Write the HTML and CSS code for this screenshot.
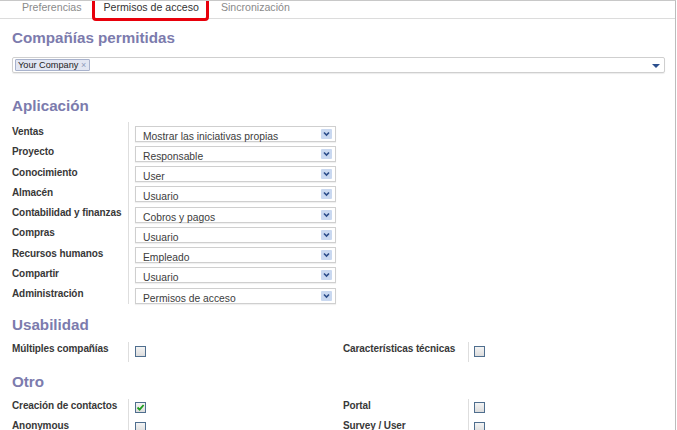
FILE: index.html
```html
<!DOCTYPE html>
<html lang="es">
<head>
<meta charset="utf-8">
<title>Permisos de acceso</title>
<link rel="stylesheet" href="styles.css">
</head>
<body>
<div class="page">
  <div class="tabs">
    <span class="tab">Preferencias</span>
    <span class="tab active">Permisos de acceso<span class="hl"></span></span>
    <span class="tab">Sincronización</span>
  </div>
  <div class="sheet">
    <h2 class="sec first">Compañías permitidas</h2>
    <div class="m2m">
      <span class="tag">Your Company <span class="x">×</span></span>
      <svg class="dd" width="8" height="4" viewBox="0 0 8 4"><path d="M0 0H8L4 4Z" fill="#2b4f8e"/></svg>
    </div>

    <h2 class="sec app-h">Aplicación</h2>
    <div class="apps">
      <div class="lbl">Ventas</div><div class="fld"><div class="sel"><span>Mostrar las iniciativas propias</span><svg class="arr" width="11" height="10" viewBox="0 0 11 10"><rect x="0" y="0" width="11" height="10" rx="1" fill="#c9d8f0"/><path d="M3 3.5L5.5 6L8 3.5" stroke="#2d4d8a" stroke-width="1.6" fill="none"/></svg></div></div>
      <div class="lbl">Proyecto</div><div class="fld"><div class="sel"><span>Responsable</span><svg class="arr" width="11" height="10" viewBox="0 0 11 10"><rect x="0" y="0" width="11" height="10" rx="1" fill="#c9d8f0"/><path d="M3 3.5L5.5 6L8 3.5" stroke="#2d4d8a" stroke-width="1.6" fill="none"/></svg></div></div>
      <div class="lbl">Conocimiento</div><div class="fld"><div class="sel"><span>User</span><svg class="arr" width="11" height="10" viewBox="0 0 11 10"><rect x="0" y="0" width="11" height="10" rx="1" fill="#c9d8f0"/><path d="M3 3.5L5.5 6L8 3.5" stroke="#2d4d8a" stroke-width="1.6" fill="none"/></svg></div></div>
      <div class="lbl">Almacén</div><div class="fld"><div class="sel"><span>Usuario</span><svg class="arr" width="11" height="10" viewBox="0 0 11 10"><rect x="0" y="0" width="11" height="10" rx="1" fill="#c9d8f0"/><path d="M3 3.5L5.5 6L8 3.5" stroke="#2d4d8a" stroke-width="1.6" fill="none"/></svg></div></div>
      <div class="lbl">Contabilidad y finanzas</div><div class="fld"><div class="sel"><span>Cobros y pagos</span><svg class="arr" width="11" height="10" viewBox="0 0 11 10"><rect x="0" y="0" width="11" height="10" rx="1" fill="#c9d8f0"/><path d="M3 3.5L5.5 6L8 3.5" stroke="#2d4d8a" stroke-width="1.6" fill="none"/></svg></div></div>
      <div class="lbl">Compras</div><div class="fld"><div class="sel"><span>Usuario</span><svg class="arr" width="11" height="10" viewBox="0 0 11 10"><rect x="0" y="0" width="11" height="10" rx="1" fill="#c9d8f0"/><path d="M3 3.5L5.5 6L8 3.5" stroke="#2d4d8a" stroke-width="1.6" fill="none"/></svg></div></div>
      <div class="lbl">Recursos humanos</div><div class="fld"><div class="sel"><span>Empleado</span><svg class="arr" width="11" height="10" viewBox="0 0 11 10"><rect x="0" y="0" width="11" height="10" rx="1" fill="#c9d8f0"/><path d="M3 3.5L5.5 6L8 3.5" stroke="#2d4d8a" stroke-width="1.6" fill="none"/></svg></div></div>
      <div class="lbl">Compartir</div><div class="fld"><div class="sel"><span>Usuario</span><svg class="arr" width="11" height="10" viewBox="0 0 11 10"><rect x="0" y="0" width="11" height="10" rx="1" fill="#c9d8f0"/><path d="M3 3.5L5.5 6L8 3.5" stroke="#2d4d8a" stroke-width="1.6" fill="none"/></svg></div></div>
      <div class="lbl">Administración</div><div class="fld"><div class="sel"><span>Permisos de acceso</span><svg class="arr" width="11" height="10" viewBox="0 0 11 10"><rect x="0" y="0" width="11" height="10" rx="1" fill="#c9d8f0"/><path d="M3 3.5L5.5 6L8 3.5" stroke="#2d4d8a" stroke-width="1.6" fill="none"/></svg></div></div>
    </div>

    <h2 class="sec usa-h">Usabilidad</h2>
    <div class="checks usa">
      <div class="clbl">Múltiples compañías</div><div class="cfld"><span class="cb"></span></div>
      <div class="clbl">Características técnicas</div><div class="cfld right"><span class="cb"></span></div>
    </div>

    <h2 class="sec otro-h">Otro</h2>
    <div class="checks otro">
      <div class="clbl">Creación de contactos</div><div class="cfld"><span class="cb on"><svg width="9" height="9" viewBox="0 0 9 9"><path d="M1.5 4.5L3.6 6.6L7.6 2" stroke="#1e9e1e" stroke-width="1.8" fill="none"/></svg></span></div>
      <div class="clbl">Portal</div><div class="cfld right"><span class="cb"></span></div>
      <div class="clbl">Anonymous</div><div class="cfld"><span class="cb"></span></div>
      <div class="clbl">Survey / User</div><div class="cfld right"><span class="cb"></span></div>
    </div>
  </div>
</div>
</body>
</html>
```
FILE: styles.css
```css
html, body {
  margin: 0;
  padding: 0;
  background: #fff;
}
body {
  font-family: "Liberation Sans", Arial, sans-serif;
  overflow: hidden;
}
.page {
  width: 676px;
  height: 430px;
  box-sizing: border-box;
  border-right: 1px solid #bcbcbc;
  border-top: 1px solid #c8c8c8;
  overflow: hidden;
}
.tabs {
  display: flex;
  height: 17px;
  padding-left: 11px;
  border-bottom: 1px solid #dcdcdc;
}
.tab {
  position: relative;
  padding: 0 11px;
  font-size: 10.6px;
  line-height: 12px;
  color: #8a8a8a;
}
.tab.active {
  color: #333;
}
.hl {
  position: absolute;
  left: 0;
  right: 1px;
  top: -8px;
  bottom: -3px;
  border: 3px solid #e8000b;
  border-radius: 4px;
}
.sheet {
  padding-left: 12px;
}
.sec {
  margin: 0;
  font-size: 15.2px;
  line-height: 20px;
  font-weight: bold;
  color: #7c7bad;
}
.sec.first { margin-top: 9px; }
.m2m {
  margin-top: 9px;
  width: 653px;
  height: 16px;
  box-sizing: border-box;
  border: 1px solid #cfcfcf;
  border-radius: 2px;
  box-shadow: 0 1px 1px rgba(0,0,0,0.08);
  display: flex;
  align-items: center;
  padding: 0 4px 0 2px;
}
.tag {
  height: 12px;
  box-sizing: border-box;
  border: 1px solid #a8b2cc;
  background: #e2e6f2;
  font-size: 9.2px;
  line-height: 10px;
  color: #222;
  padding: 0 3px 0 2px;
  border-radius: 1px;
}
.tag .x {
  color: #8e9bbb;
  font-size: 9px;
}
.dd {
  margin-left: auto;
  margin-top: 1px;
}
.sec.app-h { margin-top: 23px; }
.apps {
  margin-top: 6px;
  display: grid;
  grid-template-columns: 116px 208px;
  grid-auto-rows: 20.25px;
}
.lbl {
  font-size: 10px;
  line-height: 14px;
  padding-top: 3px;
  font-weight: bold;
  color: #383838;
  white-space: nowrap;
  letter-spacing: -0.1px;
}
.fld {
  border-left: 1px solid #dedede;
  padding: 3.5px 0 0 6px;
}
.sel {
  width: 201px;
  height: 16px;
  box-sizing: border-box;
  border: 1px solid #cfcfcf;
  box-shadow: 0 1px 1px rgba(0,0,0,0.06);
  display: flex;
  align-items: flex-start;
  padding: 2px 3px 0 7px;
  font-size: 10.3px;
  line-height: 13px;
  color: #3c3c3c;
}
.sel span {
  padding-top: 1px;
}
.arr {
  margin-left: auto;
}
.sec.usa-h { margin-top: 11px; }
.checks {
  display: grid;
  grid-template-columns: 116px 215px 125px 1fr;
  grid-auto-rows: 20px;
}
.checks.usa { margin-top: 7px; }
.sec.otro-h { margin-top: 10px; }
.checks.otro { margin-top: 6.5px; }
.clbl {
  font-size: 10px;
  line-height: 14px;
  font-weight: bold;
  color: #383838;
  white-space: nowrap;
  letter-spacing: -0.1px;
}
.cfld {
  border-left: 1px solid #dedede;
  padding: 3.5px 0 0 6px;
}
.cfld.right {
  padding-left: 5px;
}
.cb {
  display: block;
  width: 11px;
  height: 11px;
  box-sizing: border-box;
  border: 1.5px solid #4f6e8e;
  background: linear-gradient(#f4f4f4, #dcdcdc);
  position: relative;
}
.cb svg {
  position: absolute;
  left: 0;
  top: 0;
}
```
